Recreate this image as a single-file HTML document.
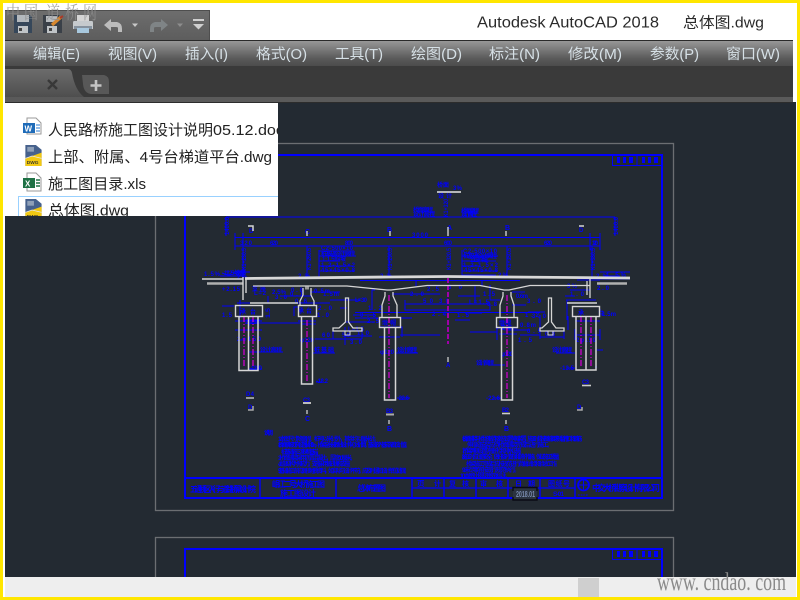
<!DOCTYPE html>
<html lang="zh"><head><meta charset="utf-8"><title>AutoCAD 2018</title>
<style>
html,body{margin:0;padding:0;background:#fff;width:800px;height:600px;overflow:hidden}
svg{display:block}
.ui{font-family:"Liberation Sans","Noto Sans CJK SC",sans-serif}
</style></head><body>
<svg width="800" height="600" viewBox="0 0 800 600" xmlns="http://www.w3.org/2000/svg" class="ui">
<defs>
<linearGradient id="mb" x1="0" y1="0" x2="0" y2="1"><stop offset="0" stop-color="#979797"/><stop offset=".7" stop-color="#5a5a5a"/><stop offset="1" stop-color="#4c4c4c"/></linearGradient>
<linearGradient id="qa" x1="0" y1="0" x2="0" y2="1"><stop offset="0" stop-color="#6e6e6e"/><stop offset="1" stop-color="#5d5d5d"/></linearGradient>
<linearGradient id="tb" x1="0" y1="0" x2="0" y2="1"><stop offset="0" stop-color="#6c6c6c"/><stop offset="1" stop-color="#4e4e4e"/></linearGradient>
<clipPath id="pop"><rect x="5" y="103" width="273" height="113"/></clipPath>
<clipPath id="cv"><rect x="5" y="102" width="791" height="475"/></clipPath>
<symbol id="dwg" viewBox="0 0 18 22"><path d="M1 0H12L18 5V22H1Z" fill="#46618c"/><path d="M3 2H10V7H3Z" fill="#8fa0b8"/><path d="M1 14L18 8V22H1Z" fill="#f2c811"/><path d="M1 14L8 11.5L18 14" fill="none" stroke="#e8e8e8" stroke-width=".8"/><text x="2.500" y="20" font-size="5" font-weight="700" fill="#3a3a2a">DWG</text></symbol>
</defs>

<rect width="800" height="600" fill="#fff"/>

<!-- canvas -->
<rect x="5" y="102" width="791" height="475" fill="#232a32"/>

<!-- menu -->
<rect x="5" y="40" width="788" height="1" fill="#2a2a2a"/>
<rect x="5" y="41" width="788" height="25" fill="url(#mb)"/>
<rect x="5" y="66" width="788" height="31" fill="#3a3a3a"/>
<rect x="5" y="97" width="788" height="5" fill="#5a5a5a"/>
<rect x="5" y="102" width="788" height="1" fill="#2c2c2c"/>
<g font-size="14.5" fill="#d6e0e6">
<text x="33" y="59" textLength="47" lengthAdjust="spacingAndGlyphs">编辑(E)</text>
<text x="108" y="59" textLength="49" lengthAdjust="spacingAndGlyphs">视图(V)</text>
<text x="185" y="59" textLength="43" lengthAdjust="spacingAndGlyphs">插入(I)</text>
<text x="256" y="59" textLength="51" lengthAdjust="spacingAndGlyphs">格式(O)</text>
<text x="335" y="59" textLength="48" lengthAdjust="spacingAndGlyphs">工具(T)</text>
<text x="411" y="59" textLength="51" lengthAdjust="spacingAndGlyphs">绘图(D)</text>
<text x="489" y="59" textLength="51" lengthAdjust="spacingAndGlyphs">标注(N)</text>
<text x="568" y="59" textLength="54" lengthAdjust="spacingAndGlyphs">修改(M)</text>
<text x="650" y="59" textLength="49" lengthAdjust="spacingAndGlyphs">参数(P)</text>
<text x="726" y="59" textLength="54" lengthAdjust="spacingAndGlyphs">窗口(W)</text>
</g>

<!-- tabs -->
<path d="M5 69H68Q71 69 72 73Q75 90 84 97H5Z" fill="url(#tb)"/>
<path d="M48 80L57 89M57 80L48 89" stroke="#383838" stroke-width="2.400"/>
<path d="M82 75H104Q109 76 109 82V94H92Q84 94 83 84Z" fill="#585858"/>
<path d="M96 80V91M90.500 85.500H101.500" stroke="#c4c4c4" stroke-width="2.600"/>

<!-- QAT -->
<rect x="5" y="10" width="205" height="30" fill="url(#qa)"/>
<path d="M5 10.500H209.500V40" fill="none" stroke="#4e4e4e"/>
<!-- save -->
<path d="M14 15H30L32 17V33H14Z" fill="#36475a"/><rect x="17" y="15" width="12" height="7" fill="#b4b9bd"/><rect x="18" y="26" width="10" height="7" fill="#c0c4c7"/><rect x="19" y="28" width="3" height="3" fill="#444"/>
<!-- save as -->
<path d="M43 15H59L62 18V33H43Z" fill="#3a4048"/><rect x="46" y="16" width="11" height="6" fill="#b8bcc0"/><rect x="47" y="26" width="10" height="7" fill="#c0c4c7"/><rect x="49" y="28" width="3" height="3" fill="#444"/><path d="M52 25L61 17" stroke="#d8882e" stroke-width="3.200"/><path d="M60 18L63 16" stroke="#a83a2b" stroke-width="2"/>
<!-- print -->
<rect x="77" y="15" width="12" height="6" fill="#d4d4d4"/><path d="M74 21H92Q93 21 93 23V29H73V23Q73 21 74 21Z" fill="#c6cacd"/><rect x="74" y="26" width="18" height="3" fill="#86929e"/><rect x="77" y="28" width="12" height="5" fill="#a8c8de"/>
<!-- undo -->
<path d="M104 25L111 19V22H117Q122 23 122 29V32H118V28Q118 27 116 27H111V31Z" fill="#bcbcbc"/>
<path d="M132 23.500H138L135 27Z" fill="#c8c8c8"/>
<!-- redo -->
<path d="M168 25L161 19V22H155Q150 23 150 29V32H154V28Q154 27 156 27H161V31Z" fill="#7f8486"/>
<path d="M177 23.500H183L180 27Z" fill="#8d8d8d"/>
<rect x="193" y="19" width="11" height="2" fill="#d0d0d0"/><path d="M193 24H204L198.500 29.500Z" fill="#d0d0d0"/>

<!-- title text -->
<text x="477" y="27.500" font-size="15.500" fill="#2a2a2a" textLength="182" lengthAdjust="spacingAndGlyphs">Autodesk AutoCAD 2018</text>
<text x="683" y="27.500" font-size="15" fill="#2a2a2a" textLength="81" lengthAdjust="spacingAndGlyphs">总体图.dwg</text>

<!-- drawing -->
<g clip-path="url(#cv)">
<rect x="155.500" y="143.500" width="518" height="367" fill="none" stroke="#6b6e72" stroke-width="1.300"/>
<rect x="155.500" y="537.500" width="518" height="60" fill="none" stroke="#6b6e72" stroke-width="1.300"/>

<g fill="none" stroke="#0000ff">
<rect x="185" y="155" width="477" height="343" stroke-width="2"/>
<rect x="185" y="549" width="477" height="60" stroke-width="2"/>
<path d="M185 478H662" stroke-width="2"/>
<path d="M260 478V498M336 478V498M412 478V498M444 478V498M476 478V498M508 478V498M540 478V498M575 478V498" stroke-width="1.400"/>
<path d="M412 488H575" stroke-width="1.200"/>
<rect x="612.500" y="155.500" width="49" height="10"/><path d="M637 155V165"/>
<rect x="612.500" y="549.500" width="49" height="10"/><path d="M637 549V559"/>
</g>
<g fill="#0000ff">
<rect x="617" y="157" width="3" height="6"/><rect x="623" y="157" width="3" height="6"/><rect x="629" y="157" width="4" height="6"/><rect x="642" y="157" width="3" height="6"/><rect x="648" y="157" width="3" height="6"/><rect x="654" y="157" width="4" height="6"/>
<rect x="617" y="551" width="3" height="6"/><rect x="623" y="551" width="3" height="6"/><rect x="629" y="551" width="4" height="6"/><rect x="642" y="551" width="3" height="6"/><rect x="648" y="551" width="3" height="6"/><rect x="654" y="551" width="4" height="6"/>
</g>

<!-- dims -->
<g fill="none" stroke="#0000ff">
<path d="M226 217H615M226 217V236M615 217V236"/>
<path d="M235 237.500H600M235 246H600M235 233V250M600 233V250M243 233V250M590 233V250" />
<path d="M243 246V278M307 246V278M389 246V278M507 246V278M592 246V278"/>
<path d="M319 250V278M462 250V278"/>
<path d="M319 251H354M319 256H356M319 261H340M319 266H352M319 271H354M462 256H498M462 261H496M462 266H480M462 271H497M462 275H496"/>
<path d="M360 280.500H520M416 281V286M482 281V286M355 312.500H540M405 304H490V310H405Z"/>
<path d="M237 303H268M240 300V318M268 303V296M280 296H312M298 307H294V316M286 303H330M250 323H300M240 340H242M247 320H260"/>
<path d="M310 292H340M330 300H360M340 308H347M353 315H375M345 322H375M345 327V342M345 336H372M355 318H378M375 290H372V310"/>
<path d="M392 294H440M405 300V308M400 318H412M400 335H440M398 327H402V337"/>
<path d="M458 296H480M475 285V303M490 285V300M490 300H500M455 320H470M465 313H482M512 292H525M512 305H526M528 312H545M540 315V330M508 330H530M520 335H540M497 326V340M497 332H470"/>
<path d="M565 296H575M577 280H600M605 276H620M600 279H630M570 290H590M566 300H596M567 300V320M568 330V316M575 321H600M575 329V340M600 329V340M575 335H600"/>
<path d="M235 321H262M235 330H262M298 321H316M301 324H316M379 327H400M379 337H400M496 328H517M499 334H517"/>
<path d="M345 338V345M315 339H362M333 330V339M362 330V339M540 330V339M564 330V339M540 337H564"/>
<path d="M220 276H243M231 276L222 273M250 272H236M600 272H630"/>
<path d="M222 306H234M248 352H258M258 352H283M313 353H335M395 353H418M249 369H262M316 382H322M397 398H410M493 398H502M488 365H505M556 353H575M597 350H603M595 367H597M575 368H566"/>
</g>
<g font-family='"Liberation Sans","Noto Sans CJK SC",sans-serif' font-size="6" font-weight="700" fill="#0000ff" lengthAdjust="spacingAndGlyphs">
<text x="224" y="275" textLength="22">1/2×300</text>
<text x="321" y="250" textLength="32">C2-500×10</text>
<text x="321" y="256" textLength="34">桩基础设计高程</text>
<text x="322" y="261" textLength="24">1:1.5斜坡</text>
<text x="321" y="267" textLength="34">1.2-1.5×2</text>
<text x="321" y="272" textLength="34">45×45×0.8</text>
<text x="463" y="253" textLength="34">C2-500×10</text>
<text x="463" y="258" textLength="34">桩基础设计高程</text>
<text x="470" y="262" textLength="18">1:1.5斜坡</text>
<text x="463" y="267" textLength="35">1.2-1.5×2</text>
<text x="464" y="272" textLength="34">45×45×0.8</text>
<text x="413" y="212" textLength="20">桥面高程</text>
<text x="413" y="216" textLength="22">设计高程</text>
<text x="461" y="213" textLength="18">桥面高程</text>
<text x="461" y="216" textLength="16">设计高程</text>
<text x="240" y="245" textLength="12">320</text>
<text x="270" y="245" textLength="8">620</text>
<text x="345" y="245" textLength="8">800</text>
<text x="444" y="245" textLength="8">600</text>
<text x="544" y="245" textLength="8">620</text>
<text x="592" y="245" textLength="6">120</text>
<text x="412" y="237" textLength="16">3000</text>
<text x="437" y="187" textLength="12">桥面</text>
<text x="453" y="190" textLength="9">3%</text>
<text x="438" y="198" textLength="14">设计</text>
<text x="204" y="276" textLength="16">1.5%</text>
<text x="226" y="275" textLength="20">1.5坡度</text>
<text x="237" y="279" textLength="10">2%</text>
<text x="298" y="278" textLength="12">2%</text>
<text x="380" y="278" textLength="12">2%</text>
<text x="498" y="277" textLength="10">2%</text>
<text x="596" y="278" textLength="12">2%</text>
<text x="606" y="277" textLength="20">1.5%</text>
<text x="222" y="291" textLength="18">+2.15</text>
<text x="252" y="291" textLength="14">支座</text>
<text x="254" y="295" textLength="12">L=2</text>
<text x="272" y="294" textLength="14">2.5%</text>
<text x="275" y="299" textLength="12">3.0</text>
<text x="295" y="303" textLength="12">0.6</text>
<text x="291" y="292" textLength="12">0.8</text>
<text x="290" y="296" textLength="14">0.8</text>
<text x="314" y="293" textLength="16">0.5m</text>
<text x="323" y="296" textLength="16">1.5m</text>
<text x="355" y="302" textLength="12">L=30</text>
<text x="368" y="310" textLength="14">1.2</text>
<text x="410" y="296" textLength="14">2.0</text>
<text x="427" y="291" textLength="12">2.5</text>
<text x="423" y="303" textLength="10">50</text>
<text x="439" y="303" textLength="10">30</text>
<text x="448" y="289" textLength="14">30</text>
<text x="483" y="296" textLength="12">1.5</text>
<text x="487" y="306" textLength="10">0.8</text>
<text x="516" y="298" textLength="12">0.6m</text>
<text x="527" y="303" textLength="14">3.0</text>
<text x="469" y="304" textLength="20">L=1.5</text>
<text x="432" y="316" textLength="14">2.4</text>
<text x="457" y="317" textLength="12">1.5</text>
<text x="525" y="317" textLength="14">1.2</text>
<text x="500" y="330" textLength="12">支座</text>
<text x="520" y="327" textLength="16">0.8m</text>
<text x="532" y="318" textLength="14">3.0</text>
<text x="527" y="333" textLength="14">0.5</text>
<text x="518" y="342" textLength="14">1.5</text>
<text x="567" y="288" textLength="10">3%</text>
<text x="570" y="296" textLength="14">1.0</text>
<text x="597" y="290" textLength="12">2.0</text>
<text x="602" y="316" textLength="14">1.5m</text>
<text x="578" y="315" textLength="26">承台</text>
<text x="240" y="314" textLength="16">承台</text>
<text x="222" y="317" textLength="10">1.5</text>
<text x="298" y="313" textLength="14">承台</text>
<text x="318" y="310" textLength="14">2.0</text>
<text x="317" y="317" textLength="12">1.0</text>
<text x="382" y="325" textLength="14">墩帽</text>
<text x="499" y="325" textLength="12">墩帽</text>
<text x="360" y="317" textLength="16">0.5</text>
<text x="367" y="323" textLength="12">2.5</text>
<text x="348" y="331" textLength="16">L=1.5</text>
<text x="357" y="335" textLength="12">1.0</text>
<text x="350" y="344" textLength="12">3.0</text>
<text x="322" y="337" textLength="8">60</text>
<text x="342" y="337" textLength="8">50</text>
<text x="545" y="336" textLength="10">0.8</text>
<text x="245" y="324" textLength="14">2φ150</text>
<text x="237" y="341" textLength="24">2φ150</text>
<text x="300" y="342" textLength="14">φ120</text>
<text x="380" y="354" textLength="14">φ120</text>
<text x="501" y="356" textLength="12">φ120</text>
<text x="576" y="342" textLength="20">2φ150</text>
<text x="260" y="352" textLength="22">设计高程</text>
<text x="314" y="352" textLength="20">桩基础</text>
<text x="397" y="352" textLength="20">设计高程</text>
<text x="476" y="365" textLength="18">设计高程</text>
<text x="552" y="352" textLength="20">设计高程</text>
<text x="250" y="370" textLength="12">-13.50</text>
<text x="316" y="383" textLength="12">-18.2</text>
<text x="397" y="400" textLength="12">-22.6</text>
<text x="486" y="400" textLength="14">-22.6</text>
<text x="560" y="370" textLength="14">-13.5</text>
<text x="246" y="396" textLength="8">D4</text>
<text x="303" y="402" textLength="7">C3</text>
<text x="386" y="413" textLength="7">B3</text>
<text x="502" y="412" textLength="7">B2</text>
<text x="582" y="384" textLength="7">C3</text>
<text x="248" y="409" textLength="4">D</text>
<text x="305" y="421" font-size="7" textLength="4">C</text>
<text x="387" y="431" font-size="7" textLength="5">B</text>
<text x="504" y="431" font-size="7" textLength="5">B</text>
<text x="577" y="409" textLength="5">D</text>
<text x="446" y="367" textLength="4">A</text>
<text x="305" y="234" font-size="7" textLength="4">C</text>
<text x="387" y="232" font-size="7" textLength="4">B</text>
<text x="447" y="230" font-size="7" textLength="4">A</text>
<text x="505" y="230" font-size="7" textLength="4">B</text>
<text x="579" y="232" textLength="4">D</text>
<text x="249" y="233" textLength="4">D</text>
</g>
<!-- vertical dim text -->
<g font-family='"Liberation Sans","Noto Sans CJK SC",sans-serif' font-size="6" font-weight="700" fill="#0000ff">
<text transform="translate(229,235) rotate(-90)" textLength="18" lengthAdjust="spacingAndGlyphs">1400.0</text>
<text transform="translate(618,235) rotate(-90)" textLength="18" lengthAdjust="spacingAndGlyphs">1400.0</text>
<text transform="translate(246,270) rotate(-90)" textLength="22" lengthAdjust="spacingAndGlyphs">K1+230.5</text>
<text transform="translate(311,270) rotate(-90)" textLength="22" lengthAdjust="spacingAndGlyphs">K1+260.5</text>
<text transform="translate(392,270) rotate(-90)" textLength="22" lengthAdjust="spacingAndGlyphs">K1+290.5</text>
<text transform="translate(451,270) rotate(-90)" textLength="22" lengthAdjust="spacingAndGlyphs">K1+320.5</text>
<text transform="translate(511,270) rotate(-90)" textLength="22" lengthAdjust="spacingAndGlyphs">K1+350.5</text>
<text transform="translate(595,270) rotate(-90)" textLength="22" lengthAdjust="spacingAndGlyphs">K1+380.5</text>
<text transform="translate(448,217) rotate(-90)" textLength="18" lengthAdjust="spacingAndGlyphs">K1+320</text>
<text transform="translate(270,318) rotate(-90)" textLength="10" lengthAdjust="spacingAndGlyphs">1.5</text>
</g>

<!-- centre axes / magenta -->
<g fill="none" stroke="#cc00cc" stroke-width="1.300">
<path d="M244 316V368M253 316V368M307 320V382M389 295V398M507 295V398M581 316V368M591 316V368" stroke-dasharray="6 2 1 2"/>
<path d="M448 278V344" stroke="#a000a8" stroke-width="2" stroke-dasharray="5 2"/>
</g>

<!-- white structure -->
<g fill="none" stroke="#d6d6d6">
<path d="M202 279H243" stroke-width="1.600"/>
<path d="M207 283.500H243" stroke="#b0b0b0" stroke-width="2.600"/>
<path d="M243 277V300M246 279V293" stroke-width="1.400"/>
<path d="M245 278.500L389 277L447 276.500L505 277L630 278" stroke="#d8d8d8" stroke-width="2.800"/>
<path d="M597 283.500H627" stroke="#b0b0b0" stroke-width="2.400"/>
<path d="M253 286H347L387 290H391L427 285.500H480L504 290H509L530 285.500H590" stroke-width="1.300"/>
<path d="M590 278V298M587 281V295" stroke-width="1.300"/>
<path d="M250 303H298" stroke-width="1.400"/>
<path d="M567 303H597" stroke-width="1.400"/>
<!-- pier heads -->
<rect x="235.500" y="305.500" width="27" height="11" stroke-width="1.400"/>
<rect x="298.500" y="305.500" width="18" height="11" stroke-width="1.400"/>
<rect x="379.500" y="317.500" width="21" height="10" stroke-width="1.400"/>
<rect x="496.500" y="317.500" width="21" height="10" stroke-width="1.400"/>
<rect x="572.500" y="306.500" width="27" height="10" stroke-width="1.400"/>
<!-- piers -->
<path d="M239 317V370.500H258V317M248.500 317V370.500" stroke-width="1.500"/>
<path d="M301.500 317V384H312.500V317" stroke-width="1.500"/>
<path d="M384.500 328V400H395.500V328" stroke-width="1.500"/>
<path d="M501.500 328V400H512.500V328" stroke-width="1.500"/>
<path d="M576 317V370H596V317M586 317V370" stroke-width="1.500"/>
<!-- flares -->
<path d="M385 292V296L382 305V317M393 292V296L397 305V317" stroke-width="1.300"/>
<path d="M503 292V296L500 305V317M511 292V296L514 305V317" stroke-width="1.300"/>
<path d="M303 288V295L300 301V305M311 288V295L314 301V305" stroke-width="1.300"/>
<path d="M305 288H309" stroke="#999" stroke-width="3"/>
<!-- T sections -->
<path d="M345.500 298V322L339 328H333V331H362V328H353L348.500 322V298Z" stroke-width="1.300"/>
<path d="M548.500 298V322L542 328H540V331H564V328H556L551.500 322V298Z" stroke-width="1.300"/>
<path d="M345 331V335H350V331M548 331V335H553V331" stroke-width="1"/>
<!-- marks -->
<path d="M248 226H253V231" stroke-width="1.500"/>
<path d="M579 226H584" stroke-width="1.500"/>
<path d="M307 231V236M390 231V236M448 227V236M506 231V236" stroke="#d0d0d0" stroke-width="1.400"/>
<path d="M437 192H461" stroke="#e4e4e4" stroke-width="1.500"/>
<path d="M246 398H254" stroke-width="1.300"/><path d="M303 403H311" stroke="#bbb" stroke-width="2"/><path d="M386 414.500H394" stroke="#aaa" stroke-width="2"/><path d="M502 413.500H510" stroke="#ccc" stroke-width="1.600"/><path d="M582 385.500H591" stroke="#ccc" stroke-width="1.600"/>
<path d="M253 406V410H248" stroke="#aaa" stroke-width="1.500"/><path d="M582 407V410H577" stroke="#aaa" stroke-width="1.500"/>
<path d="M307 410V414M389 420V424M506 420V424M448 357V362" stroke="#ccc" stroke-width="1.300"/>
</g>

<!-- notes -->
<g font-family='"Liberation Sans","Noto Sans CJK SC",sans-serif' font-size="6" font-weight="700" fill="#0000ff" lengthAdjust="spacingAndGlyphs">
<text x="264" y="435" textLength="8">说明:</text>
<text x="278" y="441" textLength="102">1.本图尺寸除高程、桩号以米计外，其余均以厘米计。</text>
<text x="278" y="447" textLength="132">2.桥面横坡双向设置1.5%和1.0%，桥梁全长按路线设计中心线计算，基础嵌入基岩深度设计值。</text>
<text x="281" y="454" textLength="41">桩基础施工须探明基岩。</text>
<text x="278" y="460" textLength="78">3.桥面铺装采用沥青混凝土，厚度10厘米。</text>
<text x="278" y="466" textLength="76">4.上部结构为预应力，支座采用板式橡胶支座。</text>
<text x="278" y="473" textLength="132">5.基础施工前应复核地质资料，如实际与设计不符，应及时通知设计单位处理。</text>
<text x="462" y="441" textLength="123">6.桥面铺装与桥台搭板连接处应设置伸缩装置，施工时应按图纸要求预留槽口和钢筋。</text>
<text x="467" y="447" textLength="86">伸缩缝安装应待桥面铺装完成后进行施工。</text>
<text x="462" y="453" textLength="63">7.桥梁两侧设置防撞护栏和排水设施。</text>
<text x="462" y="459" textLength="101">8.施工时应注意安全，做好临时支撑和防护措施，保证施工质量。</text>
<text x="466" y="466" textLength="95">桥梁施工完成后应按规范进行荷载试验和验收工作。</text>
<text x="462" y="472" textLength="58">9.未尽事宜按现行规范执行。</text>
<text x="460" y="478" textLength="51">10.本图比例见图示标注。</text>
</g>
<!-- title block text -->
<g font-family='"Liberation Sans","Noto Sans CJK SC",sans-serif' font-weight="700" fill="#0000ff" lengthAdjust="spacingAndGlyphs">
<text x="190" y="492" font-size="8" textLength="66">五通桥区人行与道路桥梁设计院</text>
<text x="272" y="487" font-size="8" textLength="53">岷江二号大桥施工图</text>
<text x="280" y="496" font-size="8" textLength="36">施 工 图 设 计</text>
<text x="357" y="491" font-size="8" textLength="29">总体布置图</text>
<text x="417" y="486" font-size="7.500" textLength="8">页</text>
<text x="434" y="486" font-size="7" textLength="6">计</text>
<text x="449" y="486" font-size="7" textLength="20">复 核</text>
<text x="480" y="486" font-size="7" textLength="23">审 核</text>
<text x="515" y="486" font-size="7" textLength="20">日 期</text>
<text x="548" y="486" font-size="7" textLength="22">图纸号</text>
<text x="553" y="496" font-size="6.500" textLength="11">S-01</text>
<text x="592" y="491" font-size="8.500" textLength="68">中交大桥勘察设计有限公司</text>
<text x="578" y="496" font-size="3" textLength="10">CCCC</text>
</g>
<g fill="none" stroke="#0000ff">
<circle cx="583.500" cy="485" r="5.500" stroke-width="1.800"/><path d="M578 485H589M583.500 480V490" stroke-width="1"/>
</g>
<!-- highlighted cell -->
<rect x="513" y="488" width="24" height="12" fill="#2b3340"/>
<path d="M513 491V487.500H537V491M513 497V500H537V497" fill="none" stroke="#0a0a14" stroke-width="1.400"/>
<text x="516" y="497" font-size="8" font-weight="700" fill="#7a8cb0" textLength="19" lengthAdjust="spacingAndGlyphs">2018.01</text>
</g>

<!-- popup -->
<rect x="5" y="103" width="273" height="113" fill="#fff"/>
<g clip-path="url(#pop)">
<rect x="18.500" y="196.500" width="270" height="30" fill="#fff" stroke="#99d1ff"/>
<!-- word -->
<path d="M27 118H36L41 123V134H27Z" fill="#fff" stroke="#9a9a9a"/><rect x="23" y="123" width="12" height="10" fill="#1e6bb8"/><text x="24.500" y="131.500" font-size="8" font-weight="700" fill="#fff">W</text><path d="M36 125H40M36 128H40M36 131H40" stroke="#2b7cd3"/>
<use href="#dwg" x="24" y="145" width="18" height="21"/>
<path d="M27 173H36L41 178V191H27Z" fill="#fff" stroke="#9a9a9a"/><rect x="23" y="178" width="12" height="10" fill="#1e7145"/><text x="25" y="186.500" font-size="8" font-weight="700" fill="#fff">X</text><path d="M36 180H40M36 183H40M36 186H40" stroke="#1e7145" stroke-width="1.500"/>
<use href="#dwg" x="24" y="199" width="18" height="21"/>
<g font-size="15" fill="#222">
<text x="48" y="135" textLength="165" lengthAdjust="spacingAndGlyphs">人民路桥施工图设计说明</text>
<text x="213" y="135" textLength="71" lengthAdjust="spacingAndGlyphs">05.12.doc</text>
<text x="48" y="162" textLength="224" lengthAdjust="spacingAndGlyphs">上部、附属、4号台梯道平台.dwg</text>
<text x="48" y="189" textLength="98" lengthAdjust="spacingAndGlyphs">施工图目录.xls</text>
<text x="48" y="215.500" textLength="81" lengthAdjust="spacingAndGlyphs">总体图.dwg</text>
</g>
</g>

<!-- bottom bar -->
<rect x="5" y="577" width="791" height="20" fill="#eeeeee"/>
<rect x="578" y="578" width="21" height="19" fill="#cfcfcf"/>

<!-- watermark -->
<text x="657" y="590" font-family='"Liberation Serif",serif' font-size="25" fill="#8a8a8a" textLength="129" lengthAdjust="spacingAndGlyphs">www. cndao. com</text>

<!-- yellow border -->
<path fill-rule="evenodd" d="M0 0H800V600H0ZM3 3V597H797V3Z" fill="#ffe600"/>

<!-- top watermark -->
<g font-family='"Noto Serif CJK SC",serif' fill="#8f8f8f" fill-opacity=".8">
<text transform="translate(6,19) scale(1,1.300)" font-size="14">中</text>
<text transform="translate(24,19) scale(1,1.300)" font-size="14">国</text>
<text transform="translate(46,19) scale(1,1.300)" font-size="14">道</text>
<text transform="translate(65,19) scale(1,1.300)" font-size="14">桥</text>
<text transform="translate(83,19) scale(1,1.300)" font-size="14">网</text>
</g>
</svg>
</body></html>
